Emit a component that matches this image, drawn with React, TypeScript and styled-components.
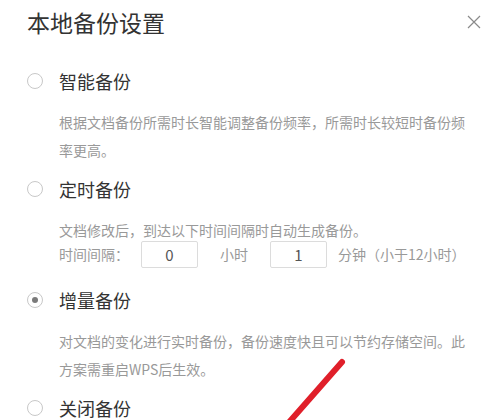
import React from "react";
import styled, { createGlobalStyle } from "styled-components";

const Global = createGlobalStyle`
  html, body { margin: 0; padding: 0; background: #fff; }
  body { width: 500px; height: 420px; overflow: hidden; }
  * { box-sizing: border-box; }
`;

const FONT = `"Noto Sans CJK SC", "Noto Sans", "Liberation Sans", sans-serif`;

const Dialog = styled.div`
  position: relative;
  width: 500px;
  height: 420px;
  overflow: hidden;
  padding: 6px 0 0 27px;
  font-family: ${FONT};
  background: #fff;
`;

const Header = styled.div`
  display: flex;
  align-items: center;
  justify-content: space-between;
  height: 32px;
  padding-right: 19px;
  margin-bottom: 28px;
`;

const Title = styled.h1`
  margin: 0;
  font-size: 23px;
  font-weight: 400;
  line-height: 32px;
  color: #333;
`;

const Close = styled.button`
  border: 0;
  background: none;
  padding: 0;
  width: 14px;
  height: 14px;
  display: flex;
  align-items: center;
  justify-content: center;
  cursor: pointer;
`;

const Options = styled.div`
  display: flex;
  flex-direction: column;
  gap: 10px;
`;

const Option = styled.div`
  display: flex;
  flex-direction: column;
`;

const OptionHead = styled.label`
  display: flex;
  align-items: center;
  height: 30px;
  gap: 16px;
`;

const Radio = styled.span<{ $checked?: boolean }>`
  position: relative;
  width: 16px;
  height: 16px;
  border-radius: 50%;
  border: 1px solid #c8c8c8;
  background: #fff;
  flex: none;
  &::after {
    content: "";
    display: ${(p) => (p.$checked ? "block" : "none")};
    position: absolute;
    left: 50%;
    top: 50%;
    width: 6px;
    height: 6px;
    margin: -3px 0 0 -3px;
    border-radius: 50%;
    background: #7a7a7a;
  }
`;

const Label = styled.span`
  font-size: 18px;
  line-height: 30px;
  color: #333;
`;

const Body = styled.div`
  margin-top: 12px;
  padding-left: 32px;
`;

const Desc = styled.p`
  margin: 0;
  width: 414px;
  font-size: 14px;
  line-height: 28px;
  color: #999;
`;

const IntervalRow = styled.div`
  display: flex;
  align-items: center;
  height: 28px;
  margin: -4px 0 7px;
  font-size: 14px;
  color: #999;
`;

const RowText = styled.span<{ $ml?: number }>`
  margin-left: ${(p) => p.$ml ?? 0}px;
  white-space: nowrap;
`;

const NumBox = styled.input<{ $ml?: number }>`
  width: 57px;
  height: 27px;
  margin-left: ${(p) => p.$ml ?? 0}px;
  border: 1px solid #dcdcdc;
  border-radius: 2px;
  background: #fff;
  text-align: center;
  font-family: ${FONT};
  font-size: 15px;
  color: #555;
  padding: 0;
  outline: none;
`;

const Annotation = styled.svg`
  position: absolute;
  left: 0;
  top: 0;
  pointer-events: none;
`;

export default function App() {
  return (
    <>
      <Global />
      <Dialog>
        <Header>
          <Title>本地备份设置</Title>
          <Close aria-label="关闭">
            <svg width="14" height="14" viewBox="0 0 14 14">
              <path d="M1 1L13 13M13 1L1 13" stroke="#8a8a8a" strokeWidth="1.2" />
            </svg>
          </Close>
        </Header>
        <Options>
          <Option>
            <OptionHead>
              <Radio />
              <Label>智能备份</Label>
            </OptionHead>
            <Body>
              <Desc>根据文档备份所需时长智能调整备份频率，所需时长较短时备份频率更高。</Desc>
            </Body>
          </Option>
          <Option>
            <OptionHead>
              <Radio />
              <Label>定时备份</Label>
            </OptionHead>
            <Body>
              <Desc>文档修改后，到达以下时间间隔时自动生成备份。</Desc>
              <IntervalRow>
                <RowText>时间间隔：</RowText>
                <NumBox $ml={12} defaultValue="0" />
                <RowText $ml={22}>小时</RowText>
                <NumBox $ml={22} defaultValue="1" />
                <RowText $ml={11}>分钟（小于12小时）</RowText>
              </IntervalRow>
            </Body>
          </Option>
          <Option>
            <OptionHead>
              <Radio $checked />
              <Label>增量备份</Label>
            </OptionHead>
            <Body>
              <Desc>对文档的变化进行实时备份，备份速度快且可以节约存储空间。此方案需重启WPS后生效。</Desc>
            </Body>
          </Option>
          <Option>
            <OptionHead>
              <Radio />
              <Label>关闭备份</Label>
            </OptionHead>
          </Option>
        </Options>
        <Annotation width="500" height="420" viewBox="0 0 500 420">
          <line x1="342" y1="362" x2="284" y2="428" stroke="#e01f2a" strokeWidth="6" strokeLinecap="round" />
        </Annotation>
      </Dialog>
    </>
  );
}
